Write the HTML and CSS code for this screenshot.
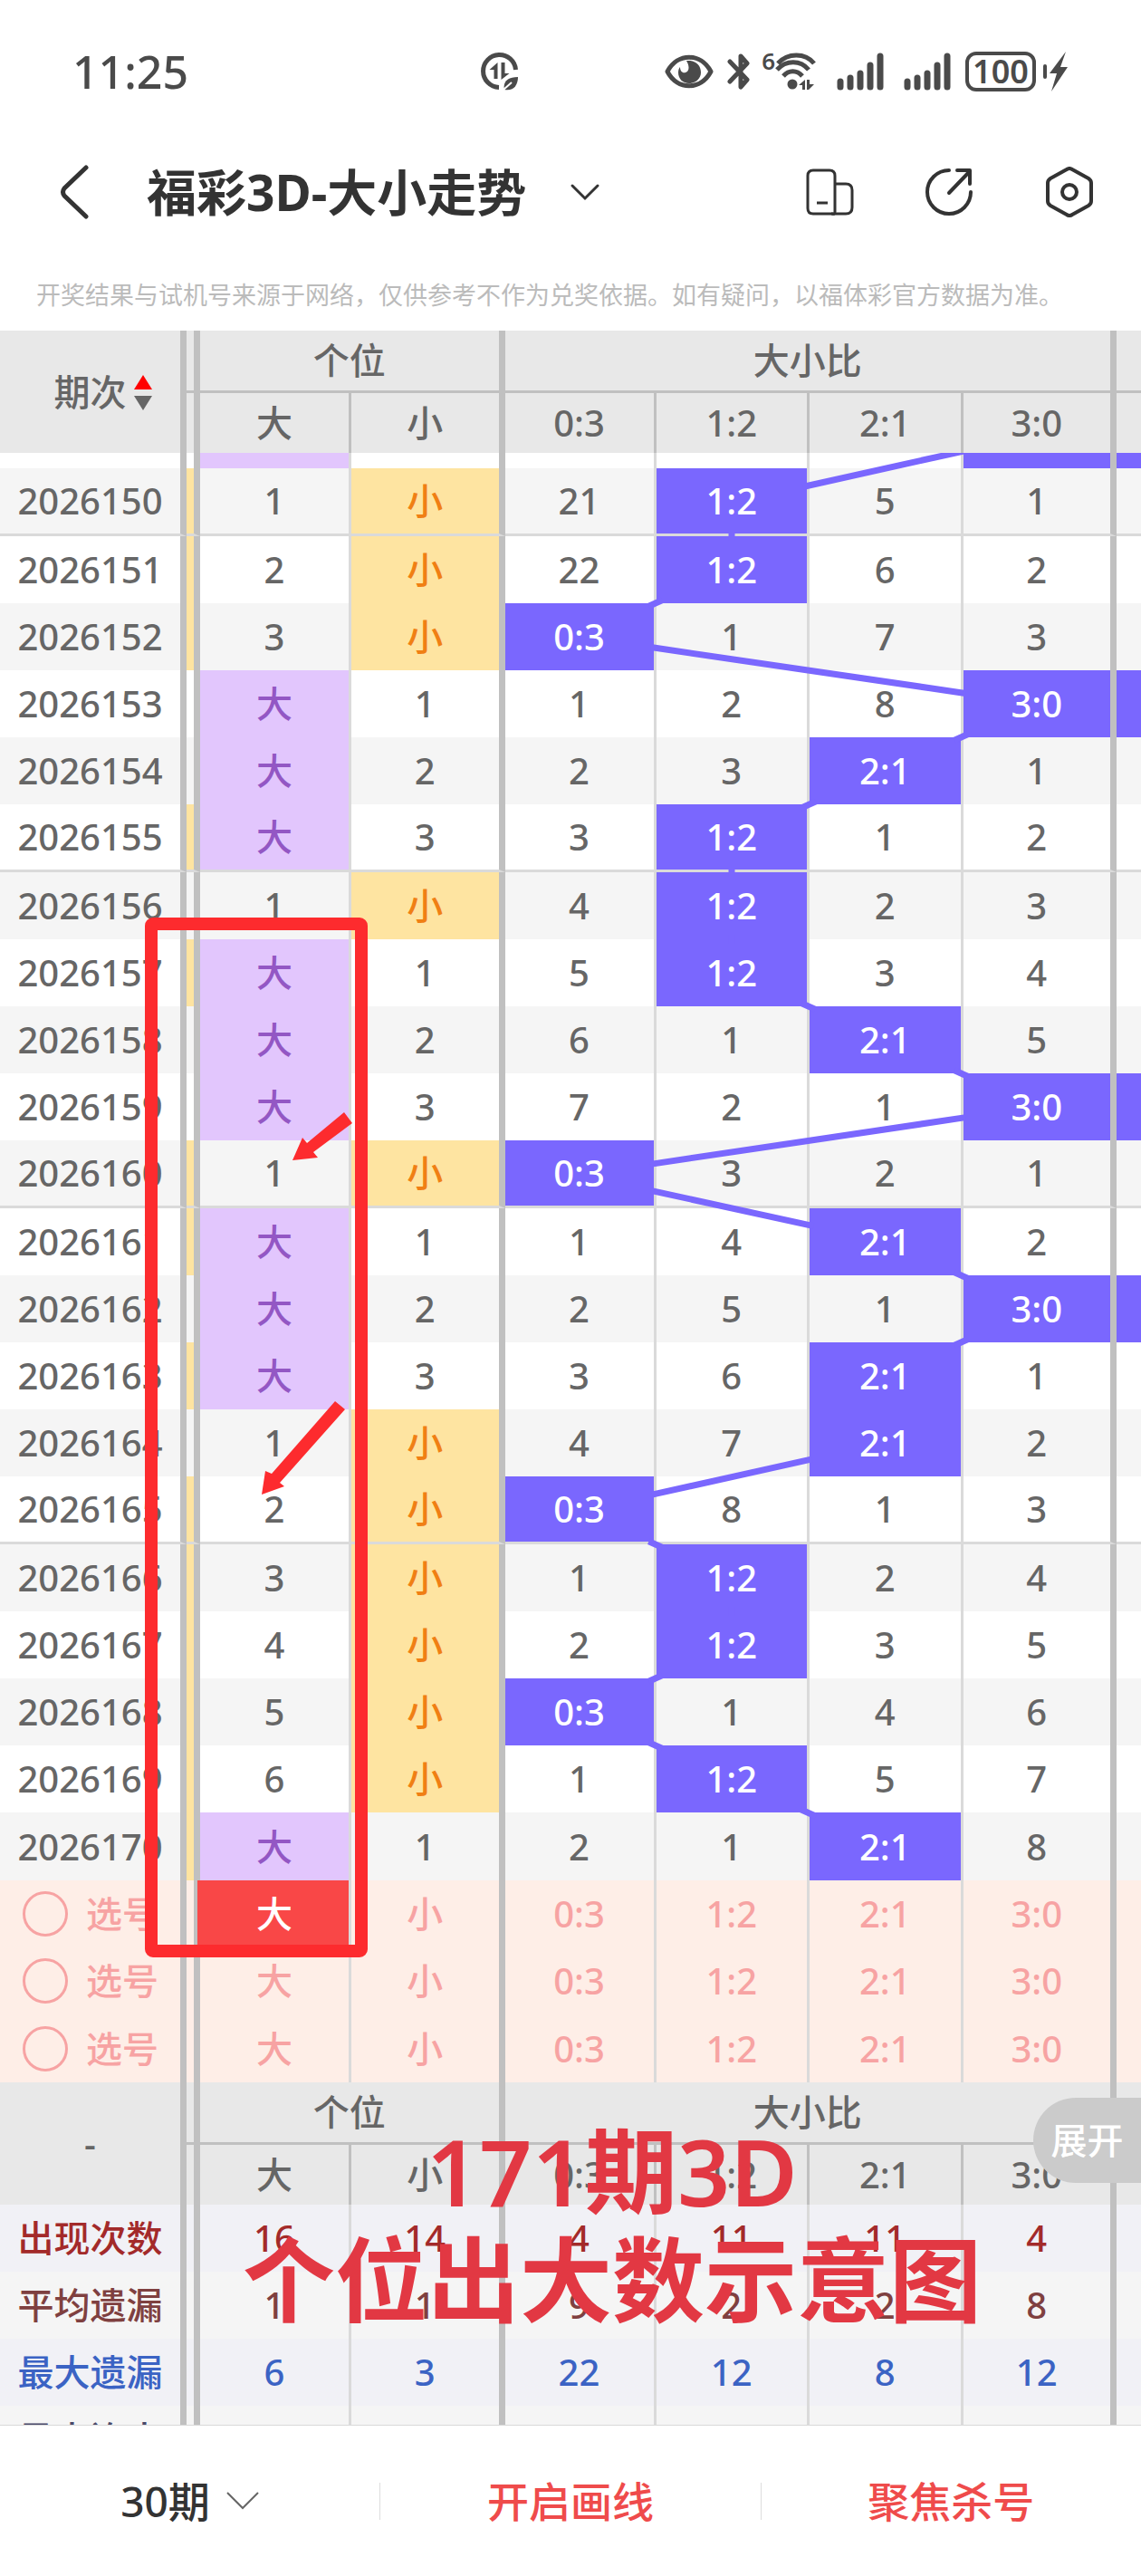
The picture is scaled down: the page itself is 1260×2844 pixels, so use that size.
FILE: index.html
```html
<!DOCTYPE html>
<html lang="zh-CN">
<head>
    <meta charset="UTF-8">
    <meta name="viewport" content="width=device-width, initial-scale=1.0">
    <title>福彩3D-大小走势</title>
    <link rel="stylesheet" href="styles.css">
</head>
<body>

    <div class="status-bar">
        <span class="time">11:25</span>
        <svg class="status-clock" width="42" height="42" viewBox="0 0 42 42">
            <path d="M20 38.500A18 18 0 1 1 38.500 19" fill="none" stroke="#4a4a4a" stroke-width="5"/>
            <path d="M18.500 11v18h-4V19h-5zM22.500 11h4v12h5l-9 7z" fill="#4a4a4a"/>
            <path d="M26 41c-2-9 4-14 15-14 0 9-5 16-15 14z" fill="#4a4a4a"/>
            <path d="M25 41l9-8" stroke="#fff" stroke-width="2"/>
        </svg>
        <div class="status-icons">
            <svg width="54" height="44" viewBox="0 0 54 44">
                <path d="M3 22C14 1 40 1 51 22 40 43 14 43 3 22z" fill="none" stroke="#4a4a4a" stroke-width="5" stroke-linejoin="round"/>
                <path d="M24 10c10-1 16 5 16 13 0 7-6 12-13 12S15 30 15 23c0-3 1-5 2-6 0 5 3 7 6 6 5-2 4-8 1-13z" fill="#4a4a4a"/>
            </svg>
            <svg class="bluetooth" width="28" height="44" viewBox="0 0 28 44">
                <path d="M3 11l19 20-7 8V5l7 8L3 33" fill="none" stroke="#4a4a4a" stroke-width="5" stroke-linejoin="round" stroke-linecap="round"/>
            </svg>
            <span class="wifi-gen">6</span>
            <svg width="46" height="44" viewBox="0 0 46 44">
                <g fill="none" stroke="#4a4a4a" stroke-width="5">
                    <path d="M3 13C14 1 33 1 43 13"/>
                    <path d="M2 20C12 9 28 9 37 20"/>
                    <path d="M9 27c6-7 15-7 21 0"/>
                </g>
                <circle cx="19" cy="36" r="5.500" fill="#4a4a4a"/>
                <path d="M33 31v11h-3v-5h-4zM35 31h3v5h5l-6 6h-2z" fill="#4a4a4a"/>
            </svg>
            <svg class="signal" width="52" height="44" viewBox="0 0 52 44">
                <path d="M4 33v6M15 29v10M26 24v15M37 15v24M48 5v34" stroke="#4a4a4a" stroke-width="7" stroke-linecap="round"/>
            </svg>
            <svg class="signal" width="52" height="44" viewBox="0 0 52 44">
                <path d="M4 33v6M15 29v10M26 24v15M37 15v24M48 5v34" stroke="#4a4a4a" stroke-width="7" stroke-linecap="round"/>
            </svg>
            <span class="battery">100</span>
            <svg width="28" height="44" viewBox="0 0 28 44">
                <path d="M2 16v12" stroke="#4a4a4a" stroke-width="4" stroke-linecap="round"/>
                <path d="M25 0L7 24h8L9 44 27 17h-8z" fill="#4a4a4a"/>
            </svg>
        </div>
    </div>

    <div class="nav-bar">
        <button class="icon-btn back" aria-label="返回">
            <svg width="34" height="60" viewBox="0 0 34 60"><path d="M30 3L6 26q-3 4 0 8L30 57" fill="none" stroke="#333" stroke-width="5" stroke-linecap="round"/></svg>
        </button>
        <h1 class="title">福彩3D-大小走势</h1>
        <button class="icon-btn" aria-label="切换玩法">
            <svg width="34" height="20" viewBox="0 0 34 20"><path d="M3 3l14 14L31 3" fill="none" stroke="#333" stroke-width="3" stroke-linecap="round"/></svg>
        </button>
        <div class="nav-actions">
            <button class="icon-btn" aria-label="统计">
                <svg width="54" height="54" viewBox="0 0 54 54" fill="none" stroke="#333" stroke-width="3">
                    <path d="M8 3h18q6 0 6 6v40q0 3-3 2H8q-6 0-6-6V9q0-6 6-6z"/>
                    <path d="M32 18h12q7 0 7 7v19q0 7-7 7H28"/>
                    <path d="M12 39h12"/>
                </svg>
            </button>
            <button class="icon-btn" aria-label="分享">
                <svg width="54" height="54" viewBox="3 0 54 54" fill="none" stroke="#333" stroke-width="4" stroke-linecap="round" stroke-linejoin="round">
                    <path d="M29 3A24 24 0 1 0 53 27"/>
                    <path d="M29 28L52 4M38 3h14v15"/>
                </svg>
            </button>
            <button class="icon-btn" aria-label="设置">
                <svg width="54" height="56" viewBox="0 0 54 56" fill="none" stroke="#333" stroke-width="4">
                    <path d="M24 3q3-2 6 0l18 10q3 2 3 5v20q0 3-3 5L30 53q-3 2-6 0L6 43q-3-2-3-5V18q0-3 3-5z"/>
                    <circle cx="27" cy="28" r="8"/>
                </svg>
            </button>
        </div>
    </div>

    <p class="notice">开奖结果与试机号来源于网络，仅供参考不作为兑奖依据。如有疑问，以福体彩官方数据为准。</p>

    <div class="chart">
        <table class="trend">
            <colgroup>
                <col class="col-issue">
                <col class="col-gap">
                <col class="col-first"><col>
                <col class="col-first"><col><col><col>
                <col class="col-next">
            </colgroup>
            <thead>
                <tr class="group-row">
                    <th rowspan="2" class="main">
                        <button class="sort">期次
                            <svg class="sort-icon" width="20" height="40" viewBox="0 0 20 40"><path d="M10 0l10 16H0z" fill="#f00"/><path d="M0 23h20L10 39z" fill="#666"/></svg>
                        </button>
                    </th>
                    <th class="main"></th>
                    <th colspan="2" class="main">个位</th>
                    <th colspan="4" class="main">大小比</th>
                    <th></th>
                </tr>
                <tr class="sub-row">
                    <th class="main"></th>
                    <th>大</th><th class="main">小</th>
                    <th>0:3</th><th>1:2</th><th>2:1</th><th class="main">3:0</th>
                    <th class="next"></th>
                </tr>
            </thead>
            <tbody id="draws"></tbody>
            <tbody id="picks"></tbody>
            <tbody class="foot-head">
                <tr class="group-row">
                    <th rowspan="2" class="main">-</th>
                    <th class="main"></th>
                    <th colspan="2" class="main">个位</th>
                    <th colspan="4" class="main">大小比</th>
                    <th></th>
                </tr>
                <tr class="sub-row">
                    <th class="main"></th>
                    <th>大</th><th class="main">小</th>
                    <th>0:3</th><th>1:2</th><th>2:1</th><th class="main">3:0</th>
                    <th class="next"></th>
                </tr>
            </tbody>
            <tbody id="stats"></tbody>
        </table>

        <svg class="lines" id="lines"></svg>

        <svg class="marker" width="246" height="1148" viewBox="0 0 246 1148">
            <rect x="7" y="7" width="232" height="1134" rx="2" fill="none" stroke="#fd2b2e" stroke-width="14" stroke-linejoin="round"/>
            <path d="M220 215l9 12-43 32 5 6-28 3 11-25 5 6z" fill="#fd2b2e"/>
            <path d="M210 534l11 9-72 81 5 4-25 9 4-26 7 3z" fill="#fd2b2e"/>
        </svg>

        <div class="caption">171期3D<br>个位出大数示意图</div>
        <button class="expand">展开</button>
    </div>

    <div class="bottom-bar">
        <div class="bottom-item">
            <label class="period">
                <select aria-label="期数">
                    <option>30期</option>
                    <option>50期</option>
                </select>
                <svg width="36" height="20" viewBox="0 0 36 20"><path d="M1 1l17 17L35 1" fill="none" stroke="#666" stroke-width="2"/></svg>
            </label>
        </div>
        <div class="bottom-item"><button class="action">开启画线</button></div>
        <div class="bottom-item"><button class="action">聚焦杀号</button></div>
    </div>

    <script src="script.js"></script>
</body>
</html>
```
FILE: styles.css
```css
* {
    box-sizing: border-box;
}
body {
    margin: 0;
    height: 100vh;
    display: flex;
    flex-direction: column;
    background-color: #fff;
    color: #666;
    font-family: "Noto Sans", "Noto Sans CJK SC", sans-serif;
    font-size: 40px;
    line-height: 54px;
}
button,
select {
    padding: 0;
    border: none;
    background: none;
    color: inherit;
    font: inherit;
    cursor: pointer;
}
svg {
    display: block;
}

/* status bar */
.status-bar {
    display: flex;
    align-items: center;
    justify-content: space-between;
    height: 158px;
    padding: 0 80px;
    color: #4a4a4a;
}
.time {
    flex: 1;
    font-size: 50px;
    font-weight: 500;
}
.status-icons {
    flex: 1;
    display: flex;
    align-items: center;
    justify-content: flex-end;
}
.status-clock {
    margin-right: 156px;
}
.bluetooth {
    margin: 0 10px 0 15px;
}
.wifi-gen {
    align-self: flex-start;
    font-size: 26px;
    font-weight: 600;
    line-height: 20px;
}
.signal {
    margin-left: 22px;
}
.battery {
    width: 78px;
    height: 44px;
    margin: 0 8px 0 16px;
    border: 4px solid #4a4a4a;
    border-radius: 12px;
    font-size: 36px;
    font-weight: 600;
    line-height: 36px;
    text-align: center;
}

/* nav bar */
.nav-bar {
    display: flex;
    align-items: center;
    height: 108px;
    padding: 0 52px 0 65px;
}
.title {
    margin: 0 48px 0 63px;
    color: #333;
    font-size: 55px;
    font-weight: 700;
    line-height: 72px;
}
.nav-actions {
    display: flex;
    align-items: center;
    gap: 78px;
    margin-left: auto;
}
.notice {
    margin: 0;
    padding: 42px 40px 21px;
    color: #bbb;
    font-size: 27px;
    line-height: 36px;
    white-space: nowrap;
}

/* trend chart */
.chart {
    position: relative;
    flex: 1;
    min-height: 0;
    overflow: hidden;
}
.trend {
    width: 100%;
    table-layout: fixed;
    border-collapse: separate;
    border-spacing: 0;
    text-align: center;
}
.col-issue {
    width: 206px;
}
.col-gap {
    width: 15px;
}
.col-first {
    width: 167px;
}
.col-next {
    width: 27px;
}
.trend th,
.trend td {
    padding: 0;
    border-right: 3px solid #dadada;
    font-weight: 500;
    white-space: nowrap;
}
.trend th {
    background-color: #e8e8e8;
    border-right-color: #c0c0c0;
}
.trend .main {
    border-right: 7px solid #c0c0c0;
}
.trend tr > :last-child {
    border-right: none;
}
.group-row th:not([rowspan]) {
    height: 69px;
    border-bottom: 3px solid #c0c0c0;
}
.sub-row th {
    height: 66px;
}
.sort {
    position: relative;
}
.sort-icon {
    position: absolute;
    top: 8px;
    left: calc(100% + 8px);
}
#draws tr {
    height: 74px;
}
#draws tr:nth-child(even) {
    background-color: #f5f5f5;
}
#draws .peek {
    height: 17px;
}
#draws .group-end {
    height: 75px;
}
#draws .group-end:not(:last-child) td {
    border-bottom: 3px solid #dadada;
}
#draws .small {
    background-color: #fee4a1;
    color: #f07f14;
}
#draws .big {
    background-color: #e2c6fd;
    color: #9357c4;
}
#draws .ratio {
    background-color: #7a67fe;
    color: #fff;
}
.lines {
    position: absolute;
    left: 0;
    stroke: #7a67fe;
    stroke-width: 7;
    pointer-events: none;
}

/* pick rows */
#picks tr {
    height: 74px;
    background-color: #feeee7;
    color: #f7a3a3;
}
#picks tr:last-child {
    height: 75px;
}
.pick-label {
    display: flex;
    align-items: center;
    gap: 20px;
    padding-left: 25px;
}
.pick-label input {
    appearance: none;
    width: 50px;
    height: 50px;
    margin: 0;
    border: 3px solid #f7a3a3;
    border-radius: 50%;
}
.pick {
    display: block;
    width: 100%;
    height: 74px;
}
.pick.selected {
    background-color: #f94747;
    box-shadow: -3px 0 0 #f94747;
    color: #fff;
}

/* statistics */
#stats tr {
    height: 74px;
    background-color: #f5f5f5;
}
#stats tr:nth-child(odd) {
    background-color: #f1f1f6;
}
#stats .count {
    color: #a32a2a;
}
#stats .average {
    color: #7f4040;
}
#stats .longest {
    color: #3b63c4;
}
#stats .streak {
    color: #4a4a6a;
}

/* things drawn over the chart */
.marker {
    position: absolute;
    top: 648px;
    left: 160px;
}
.caption {
    position: absolute;
    left: 268px;
    bottom: 100px;
    color: #e23843;
    font-size: 102px;
    font-weight: 600;
    line-height: 120px;
    text-align: center;
    white-space: nowrap;
}
.expand {
    position: absolute;
    right: 0;
    bottom: 267px;
    width: 119px;
    height: 94px;
    border-radius: 47px 0 0 47px;
    background-color: #cbcbcb;
    color: #fff;
    font-weight: 500;
}

/* bottom bar */
.bottom-bar {
    display: flex;
    align-items: center;
    height: 167px;
    border-top: 1px solid #d8d8d8;
    background-color: #fff;
    font-size: 46px;
}
.bottom-item {
    flex: 1;
    display: flex;
    align-items: center;
    justify-content: center;
    height: 41px;
}
.bottom-item + .bottom-item {
    border-left: 1px solid #ddd;
}
.period {
    display: flex;
    align-items: center;
    gap: 18px;
    color: #333;
    font-weight: 500;
}
.period select {
    appearance: none;
}
.action {
    color: #ef4b4b;
    font-weight: 500;
}
```
FILE: script.js
```js
const labels = ['大', '小', '0:3', '1:2', '2:1', '3:0'];

// [previous column hit, 大, 小, 0:3, 1:2, 2:1, 3:0] - a hit cell holds its own label
const draws = [
    [1, 1, '小', 21, '1:2', 5, 1],
    [1, 2, '小', 22, '1:2', 6, 2],
    [1, 3, '小', '0:3', 1, 7, 3],
    [0, '大', 1, 1, 2, 8, '3:0'],
    [0, '大', 2, 2, 3, '2:1', 1],
    [1, '大', 3, 3, '1:2', 1, 2],
    [0, 1, '小', 4, '1:2', 2, 3],
    [1, '大', 1, 5, '1:2', 3, 4],
    [0, '大', 2, 6, 1, '2:1', 5],
    [0, '大', 3, 7, 2, 1, '3:0'],
    [1, 1, '小', '0:3', 3, 2, 1],
    [1, '大', 1, 1, 4, '2:1', 2],
    [0, '大', 2, 2, 5, 1, '3:0'],
    [1, '大', 3, 3, 6, '2:1', 1],
    [0, 1, '小', 4, 7, '2:1', 2],
    [1, 2, '小', '0:3', 8, 1, 3],
    [1, 3, '小', 1, '1:2', 2, 4],
    [1, 4, '小', 2, '1:2', 3, 5],
    [1, 5, '小', '0:3', 1, 4, 6],
    [1, 6, '小', 1, '1:2', 5, 7],
    [1, '大', 1, 2, 1, '2:1', 8]
];

const stats = [
    ['count', '出现次数', 16, 14, 4, 11, 11, 4],
    ['average', '平均遗漏', 1, 1, 9, 2, 2, 8],
    ['longest', '最大遗漏', 6, 3, 22, 12, 8, 12],
    ['streak', '最大连出', '', '', '', '', '', '']
];

function cell(content, index, extra) {
    const main = index === 1 || index === 5 ? 'main' : '';
    return `<td class="${main} ${extra}">${content}</td>`;
}

function hitClass(value, index) {
    if (value !== labels[index]) return '';
    return index === 0 ? 'big' : index === 1 ? 'small' : 'ratio';
}

function renderDraws() {
    // lower edge of draw 2026149
    let html = `<tr class="peek"><td class="main"></td><td class="main"></td>
        <td class="big"></td><td class="main"></td><td></td><td></td><td></td>
        <td class="main ratio hit"></td><td class="ratio"></td></tr>`;
    draws.forEach((row, i) => {
        const [previous, ...values] = row;
        html += `<tr class="${i % 5 === 0 ? 'group-end' : ''}"><td class="main">${2026150 + i}</td>`;
        html += `<td class="main ${previous ? 'small' : ''}"></td>`;
        values.forEach((value, index) => {
            const name = hitClass(value, index);
            html += cell(value, index, name === 'ratio' ? 'ratio hit' : name);
        });
        html += `<td class="${values[5] === '3:0' ? 'ratio' : ''}"></td></tr>`;
    });
    document.getElementById('draws').innerHTML = html;
}

function renderPicks() {
    let html = '';
    for (let i = 0; i < 3; i++) {
        html += `<tr><td class="main"><label class="pick-label"><input type="checkbox">选号</label></td><td class="main"></td>`;
        labels.forEach((label, index) => {
            const selected = i === 0 && index === 0 ? 'selected' : '';
            html += cell(`<button class="pick ${selected}">${label}</button>`, index, '');
        });
        html += '<td></td></tr>';
    }
    document.getElementById('picks').innerHTML = html;
}

function renderStats() {
    let html = '';
    stats.forEach(([name, title, ...values]) => {
        html += `<tr class="${name}"><td class="main">${title}</td><td class="main"></td>`;
        values.forEach((value, index) => html += cell(value, index, ''));
        html += '<td></td></tr>';
    });
    document.getElementById('stats').innerHTML = html;
}

// join the hit cells of neighbouring draws, drawing only what lies between the two cells
function drawLines() {
    const body = document.getElementById('draws').getBoundingClientRect();
    const chart = document.querySelector('.chart').getBoundingClientRect();
    const svg = document.getElementById('lines');
    svg.style.top = body.top - chart.top + 'px';
    svg.setAttribute('width', body.width);
    svg.setAttribute('height', body.height);

    const points = [...document.querySelectorAll('#draws .hit')].map(td => {
        const box = td.getBoundingClientRect();
        return { x: box.left + td.clientWidth / 2 - body.left, y: box.bottom - 37 - body.top, w: td.clientWidth };
    });
    let html = '';
    for (let i = 1; i < points.length; i++) {
        const a = points[i - 1];
        const b = points[i];
        const dx = b.x - a.x;
        const dy = b.y - a.y;
        const length = Math.hypot(dx, dy);
        const edge = Math.min(dx ? a.w / 2 / Math.abs(dx) : 1, 35 / dy) - 3 / length;
        html += `<line x1="${a.x + dx * edge}" y1="${a.y + dy * edge}" x2="${b.x - dx * edge}" y2="${b.y - dy * edge}"/>`;
    }
    svg.innerHTML = html;
}

renderDraws();
renderPicks();
renderStats();
drawLines();
window.addEventListener('resize', drawLines);

document.getElementById('picks').addEventListener('click', e => {
    if (e.target.classList.contains('pick')) e.target.classList.toggle('selected');
});
```
